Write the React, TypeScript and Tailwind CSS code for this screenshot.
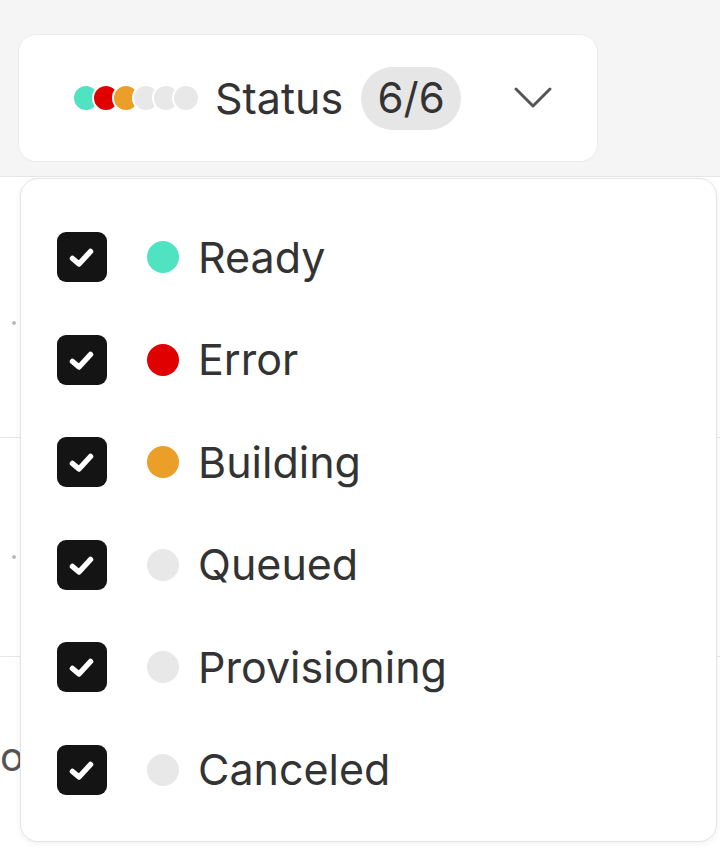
const statuses = [
  { label: "Ready", color: "bg-[#50e3c2]" },
  { label: "Error", color: "bg-[#e00000]" },
  { label: "Building", color: "bg-[#eb9e28]" },
  { label: "Queued", color: "bg-[#e8e8e8]" },
  { label: "Provisioning", color: "bg-[#e8e8e8]" },
  { label: "Canceled", color: "bg-[#e8e8e8]" },
];

function Check() {
  return (
    <div className="flex h-[50px] w-[50px] shrink-0 items-center justify-center rounded-[9px] bg-[#141414]">
      <svg width="50" height="50" viewBox="0 0 50 50" fill="none">
        <path
          d="M15.5 26.5 L22 32 L33.5 19.5"
          stroke="white"
          strokeWidth="5.5"
          strokeLinecap="round"
          strokeLinejoin="round"
        />
      </svg>
    </div>
  );
}

export default function App() {
  return (
    <main className="relative min-h-screen overflow-hidden bg-[#f5f5f5] font-['Inter',sans-serif] text-[#333]">
      {/* trigger */}
      <div className="pl-[18px] pt-[34px]">
        <button className="flex h-[128px] w-[580px] items-center rounded-[18px] border border-[#ebebeb] bg-white pl-[53px]">
          <div className="flex items-center">
            {statuses.map((s, i) => (
              <span
                key={s.label}
                className={`h-[28px] w-[28px] rounded-full border-2 border-white ${s.color} ${i > 0 ? "-ml-[8px]" : ""}`}
              />
            ))}
          </div>
          <span className="ml-[15px] text-[43px] leading-none">Status</span>
          <span className="ml-[18px] flex h-[63px] w-[100px] items-center justify-center rounded-full bg-[#e6e6e6] text-[42px] leading-none">
            6/6
          </span>
          <svg className="ml-[52px]" width="40" height="26" viewBox="0 0 40 26" fill="none">
            <path d="M3 4 L20 21 L37 4" stroke="#555" strokeWidth="3" strokeLinecap="round" strokeLinejoin="round" />
          </svg>
        </button>
      </div>

      {/* table behind the menu */}
      <div className="mt-[14px] border-t border-[#e6e6e6] bg-white">
        <div className="flex h-[260px] items-center pl-[12px] pt-[32px]">
          <span className="h-[4px] w-[4px] rounded-full bg-[#bbb]" />
        </div>
        <div className="flex h-[219px] items-center border-t border-[#e6e6e6] pl-[12px] pt-[20px]">
          <span className="h-[4px] w-[4px] rounded-full bg-[#bbb]" />
        </div>
        <div className="flex h-[200px] items-center border-t border-[#e6e6e6]">
          <span className="text-[40px] leading-none text-[#555]">o</span>
        </div>
      </div>

      {/* menu */}
      <div className="absolute left-[20px] top-[178px] h-[664px] w-[697px] rounded-[18px] border border-[#e4e4e4] bg-white pl-[36px] pt-[27px] shadow-[0_2px_6px_rgba(0,0,0,0.06)]">
        {statuses.map((s) => (
          <div key={s.label} className="flex h-[102.5px] items-center">
            <Check />
            <span className={`ml-[40px] h-[32px] w-[32px] rounded-full ${s.color}`} />
            <span className="ml-[19px] text-[43px] leading-none text-[#333]">{s.label}</span>
          </div>
        ))}
      </div>
    </main>
  );
}
